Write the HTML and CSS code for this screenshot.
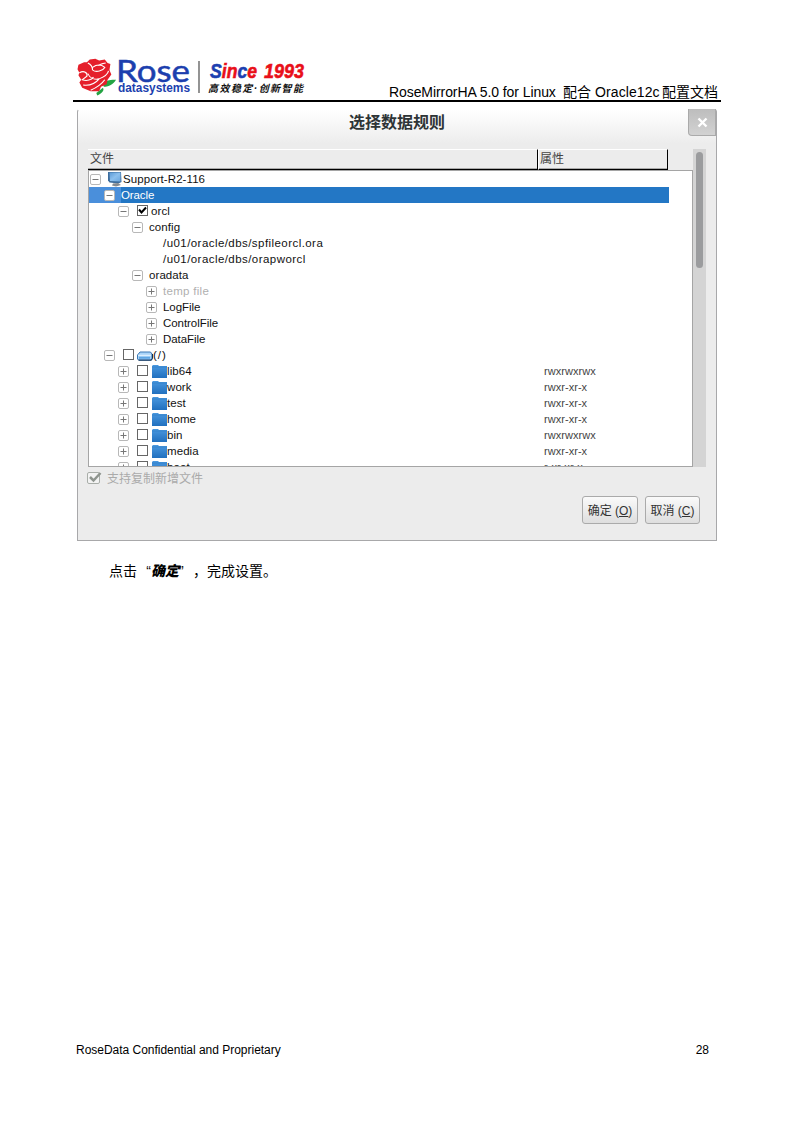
FILE: index.html
```html
<!DOCTYPE html>
<html lang="zh-CN">
<head>
<meta charset="utf-8">
<title>RoseMirrorHA 5.0 for Linux</title>
<link rel="stylesheet" href="styles.css">
</head>
<body>
<svg class="defs" width="0" height="0">
  <defs>
    <linearGradient id="blue" x1="0" y1="0" x2="0" y2="1"><stop offset="0" stop-color="#4a98df"/><stop offset="1" stop-color="#2170bf"/></linearGradient>
    <linearGradient id="screen" x1="0" y1="0" x2="1" y2="1"><stop offset="0" stop-color="#5b9ad6"/><stop offset=".5" stop-color="#8cc0ee"/><stop offset="1" stop-color="#6aa6de"/></linearGradient>
    <symbol id="minus" viewBox="0 0 11 11"><rect x=".5" y=".5" width="10" height="10" rx="1.5" fill="#fff" stroke="#b8b8b8"/><path d="M2.5 5.5h6" stroke="#777"/></symbol>
    <symbol id="plus" viewBox="0 0 11 11"><rect x=".5" y=".5" width="10" height="10" rx="1.5" fill="#fff" stroke="#b8b8b8"/><path d="M2.5 5.5h6M5.5 2.5v6" stroke="#777"/></symbol>
    <symbol id="folder" viewBox="0 0 15 13"><path d="M0 2V1L1 0h5l1 1h8v12H0z" fill="url(#blue)"/><path d="M0 2h15" stroke="#3380c8" stroke-width=".8"/></symbol>
  </defs>
</svg>
<header class="head">
  <svg class="logo" width="236" height="46" viewBox="0 0 236 46">
    <g transform="translate(3.500 5) scale(.94 .88)">
      <path d="M27 32C31 27 36 27 41 27 38 33 32 35 28 35zM20 42l7-6c2 3-1 6-6 9z" fill="#24a343"/>
      <path d="M10 7l3-3 6-1 4 2 6-1 3 4 3 1-1 7 2 5-4 6-1 5-6 3-2 5-9 0-9-4-3-6 2-3-3-5 1-3-2-4 1-5 6-3z" fill="#e51f2b"/>
      <path d="M2 19c5-3 9 0 8 4l-5 4c5 2 10 0 12-3M11 8c4 2 5 5 5 8M16 13c5-4 10-3 13 0-2 4-9 6-13 3M30 8c-5 1-7 2-8 3M33 17c-1 5-5 7-10 9-5 1-10-1-12-6M6 33c8 1 14-3 17-7M14 39c6-3 11-6 15-12" fill="none" stroke="#fff" stroke-width="1.200"/>
    </g>
    <text x="42" y="31" class="logo-rose" textLength="74" lengthAdjust="spacingAndGlyphs">Rose</text>
    <text x="44" y="41" class="logo-data" textLength="72" lengthAdjust="spacingAndGlyphs">datasystems</text>
    <path d="M125 10v32" stroke="#888" stroke-width="1.800"/>
    <text x="136" y="27" class="logo-since" textLength="47" lengthAdjust="spacingAndGlyphs"><tspan class="b">S</tspan><tspan class="r">in</tspan><tspan class="b">c</tspan><tspan class="r">e</tspan></text>
    <text x="190" y="27" class="logo-since r" textLength="40" lengthAdjust="spacingAndGlyphs">1993</text>
    <text x="134" y="41" class="logo-tag" textLength="95">高效稳定<tspan class="dot">·</tspan>创新智能</text>
  </svg>
  <div class="doc-title"><span class="t1">RoseMirrorHA 5.0 for Linux</span><span class="t2">配合</span><span class="t3">Oracle12c</span><span class="t4">配置文档</span></div>
</header>

<section class="dialog">
  <div class="titlebar"><h1>选择数据规则</h1>
    <div class="close"><svg width="11" height="11" viewBox="0 0 11 11"><path d="M1.500 1.500l8 8M9.500 1.500l-8 8" stroke="#fff" stroke-width="2.400"/></svg></div>
  </div>
  <div class="browser">
    <div class="table">
      <div class="thead"><span class="th file">文件</span><span class="th attr">属性</span></div>
      <div class="tree">
        <div class="row l0"><svg class="ex"><use href="#minus"/></svg><svg class="pc" width="16" height="16" viewBox="0 0 16 16"><path d="M1 1l13 0 .5 10-3 1.500-9-1L1 9.500z" fill="#3d6c9c"/><path d="M2.500 1.500L13.500 1.500v9L3 10z" fill="url(#screen)"/><path d="M6 12.500l5-.5 3 2-5 1.500-4-1z" fill="#858a90"/></svg><span>Support-R2-116</span></div>
        <div class="row l1 selected"><svg class="ex"><use href="#minus"/></svg><span class="name">Oracle</span></div>
        <div class="row l2"><svg class="ex"><use href="#minus"/></svg><i class="box"><svg width="9" height="9" viewBox="0 0 9 9"><path d="M1 3.500l2.500 3L8 1.500" fill="none" stroke="#000" stroke-width="2"/></svg></i><span class="after-box">orcl</span></div>
        <div class="row l3"><svg class="ex"><use href="#minus"/></svg><span class="name">config</span></div>
        <div class="row leaf"><span>/u01/oracle/dbs/spfileorcl.ora</span></div>
        <div class="row leaf"><span>/u01/oracle/dbs/orapworcl</span></div>
        <div class="row l3"><svg class="ex"><use href="#minus"/></svg><span class="name">oradata</span></div>
        <div class="row l4 off"><svg class="ex"><use href="#plus"/></svg><span class="name">temp file</span></div>
        <div class="row l4"><svg class="ex"><use href="#plus"/></svg><span class="name">LogFile</span></div>
        <div class="row l4"><svg class="ex"><use href="#plus"/></svg><span class="name">ControlFile</span></div>
        <div class="row l4"><svg class="ex"><use href="#plus"/></svg><span class="name">DataFile</span></div>
        <div class="row l1"><svg class="ex"><use href="#minus"/></svg><i class="box"></i><svg class="drive" width="16" height="10" viewBox="0 0 16 10"><path d="M3 1h10.500L15 3v4.500L14 9H1.500L.5 8V4z" fill="#a9d4f8" stroke="#3c79b5"/><path d="M1.500 9.200H14.500L15.500 7V3" fill="none" stroke="#0c2f55"/><path d="M1 4.300h13" stroke="#eaf6ff"/><path d="M2 6.800h11" stroke="#5fa6e4" stroke-width="2"/></svg><span class="slash">(/)</span></div>
        <div class="row l2"><svg class="ex"><use href="#plus"/></svg><i class="box"></i><svg class="folder"><use href="#folder"/></svg><span>lib64</span><span class="perm">rwxrwxrwx</span></div>
        <div class="row l2"><svg class="ex"><use href="#plus"/></svg><i class="box"></i><svg class="folder"><use href="#folder"/></svg><span>work</span><span class="perm">rwxr-xr-x</span></div>
        <div class="row l2"><svg class="ex"><use href="#plus"/></svg><i class="box"></i><svg class="folder"><use href="#folder"/></svg><span>test</span><span class="perm">rwxr-xr-x</span></div>
        <div class="row l2"><svg class="ex"><use href="#plus"/></svg><i class="box"></i><svg class="folder"><use href="#folder"/></svg><span>home</span><span class="perm">rwxr-xr-x</span></div>
        <div class="row l2"><svg class="ex"><use href="#plus"/></svg><i class="box"></i><svg class="folder"><use href="#folder"/></svg><span>bin</span><span class="perm">rwxrwxrwx</span></div>
        <div class="row l2"><svg class="ex"><use href="#plus"/></svg><i class="box"></i><svg class="folder"><use href="#folder"/></svg><span>media</span><span class="perm">rwxr-xr-x</span></div>
        <div class="row l2"><svg class="ex"><use href="#plus"/></svg><i class="box"></i><svg class="folder"><use href="#folder"/></svg><span>boot</span><span class="perm">r-xr-xr-x</span></div>
      </div>
    </div>
    <div class="scroll"><div class="thumb"></div></div>
  </div>
  <div class="option"><i class="check"><svg width="15" height="13" viewBox="0 0 15 13"><rect x=".5" y="1.500" width="12" height="11" rx="1.500" fill="#f3f3f3" stroke="#a9aea9"/><path d="M3 6l3.500 3.500L13.500 2" fill="none" stroke="#8f958f" stroke-width="2.500"/></svg></i><span>支持复制新增文件</span></div>
  <div class="actions"><button>确定 (<u>O</u>)</button><button class="cancel">取消 (<u>C</u>)</button></div>
</section>

<p class="note">点击<span class="q">“</span><b>确定</b><span class="q2">”</span><span class="comma">，</span>完成设置。</p>
<footer class="foot"><span class="conf">RoseData Confidential and Proprietary</span><span>28</span></footer>
</body>
</html>
```

FILE: styles.css
```css
* { box-sizing: border-box; }
body { margin: 0; width: 794px; height: 1123px; background: #fff; display: flex; flex-direction: column; font-family: "Liberation Sans", "Noto Sans CJK SC", sans-serif; color: #000; }
.defs { position: absolute; }
.head { margin: 0 73px; height: 102px; border-bottom: 2px solid #000; display: flex; justify-content: space-between; align-items: flex-end; padding: 0 4px 0 1px; flex: none; }
.logo { margin-bottom: 3px; overflow: visible; }
.logo-rose { font: 30px Lato, sans-serif; fill: #1c3fae; stroke: #1c3fae; stroke-width: .5; }
.logo-data { font: bold 12px "Liberation Sans", sans-serif; fill: #1c3fae; }
.logo-since { font: italic bold 21px "Liberation Sans", sans-serif; stroke-width: .6; }
.b { fill: #1c3fb0; stroke: #1c3fb0; }
.r { fill: #e90f19; stroke: #e90f19; }
.logo-tag { font: italic bold 10px "Noto Sans CJK SC", sans-serif; fill: #111; }
.dot { font-family: "Liberation Sans", sans-serif; }
.doc-title { display: flex; font-size: 14px; line-height: 16px; white-space: pre; }
.doc-title span { flex: none; }
.t1 { width: 174px; letter-spacing: -.08px; }
.t2 { width: 32px; }
.t3 { width: 67px; letter-spacing: .1px; }
.t4 { width: 55px; }

.dialog { margin: 7px 0 0 77px; width: 640px; height: 432px; flex: none; border: 1px solid #a8a8aa; border-top-color: #fff; border-radius: 3px 3px 0 0; background: linear-gradient(#fff, #ececec 34px); }
.titlebar { height: 39px; display: flex; justify-content: center; position: relative; }
h1 { margin: 0; font-size: 16px; line-height: 26px; color: #2e3436; font-weight: bold; }
.close { position: absolute; right: 0; top: -1px; width: 28px; height: 27px; background: linear-gradient(#bdbdbd, #d2d2d2); border: 1px solid #aaa; border-top: 0; border-radius: 0 0 0 4px; display: flex; align-items: center; justify-content: center; }
.browser { display: flex; height: 318px; margin-left: 10px; }
.table { width: 605px; }
.thead { display: flex; height: 21px; width: 605px; }
.th { height: 21px; border-top: 1px solid #fff; border-bottom: 1px solid #000; border-right: 1px solid #000; font-size: 12px; line-height: 19px; padding-left: 2px; color: #444; background: #ececec; box-shadow: inset 0 -1px #aaa; }
.file { width: 450px; }
.attr { width: 130px; border-left: 1px solid #fff; padding-left: 1px; }
.tree { height: 297px; background: #fff; border: 1px solid #a5a5a5; overflow: hidden; }
.row { display: flex; align-items: center; height: 16px; width: 580px; font-size: 11.500px; line-height: 16px; position: relative; color: #111; letter-spacing: .08px; }
.l0 { padding-left: 1px; }
.l1 { padding-left: 15px; }
.l2 { padding-left: 29px; }
.l3 { padding-left: 43px; }
.l4 { padding-left: 57px; letter-spacing: -.05px; }
.leaf { padding-left: 74px; letter-spacing: .44px; }
.ex { width: 11px; height: 11px; flex: none; margin-top: 1px; }
.pc { margin: 0 0 0 6px; }
.name { margin-left: 6px; }
.selected { color: #fff; letter-spacing: -.1px; background: linear-gradient(90deg, #4a8fdb 0 32px, #2377c5 32px); }
.off { color: #b0b0b0; letter-spacing: .3px; }
.box { width: 11px; height: 11px; border: 1px solid #666; background: #fff; margin: -1px 0 0 8px; flex: none; display: flex; }
.after-box { margin-left: 3px; }
.drive { margin: 2px 0 0 3px; }
.slash { letter-spacing: 1px; }
.folder { width: 15px; height: 13px; margin: 0 0 0 4px; }
.perm { position: absolute; left: 455px; color: #444; font-size: 11px; letter-spacing: .04px; }
.scroll { width: 13px; background: #d4d4d4; padding: 3px; }
.thumb { width: 7px; height: 116px; background: #9b9c9e; border-radius: 4px; }
.option { display: flex; align-items: center; height: 21px; padding-left: 9px; color: #aaa; font-size: 12px; }
.check { width: 15px; height: 13px; display: flex; }
.option span { margin-left: 5px; }
.actions { display: flex; justify-content: flex-end; gap: 7px; padding: 8px 16px 0 0; }
button { width: 56px; height: 28px; padding: 0 0 2px; border: 1px solid #aaa; border-radius: 3px; background: linear-gradient(#fafafa, #dedede); color: #333; font: 12px "Liberation Sans", "Noto Sans CJK SC", sans-serif; }
.cancel { width: 55px; }
.note { margin: 20px 0 0 109px; font-size: 14px; line-height: 20px; display: flex; }
.q, .q2 { width: 14px; flex: none; text-align: right; }
.q2 { text-align: left; }
.comma { width: 14px; }
.note b { font-style: italic; font-weight: 900; }
.foot { display: flex; justify-content: space-between; margin: auto 85px 65px 76px; font-size: 12px; line-height: 16px; }
.conf { letter-spacing: -.02px; }
```
